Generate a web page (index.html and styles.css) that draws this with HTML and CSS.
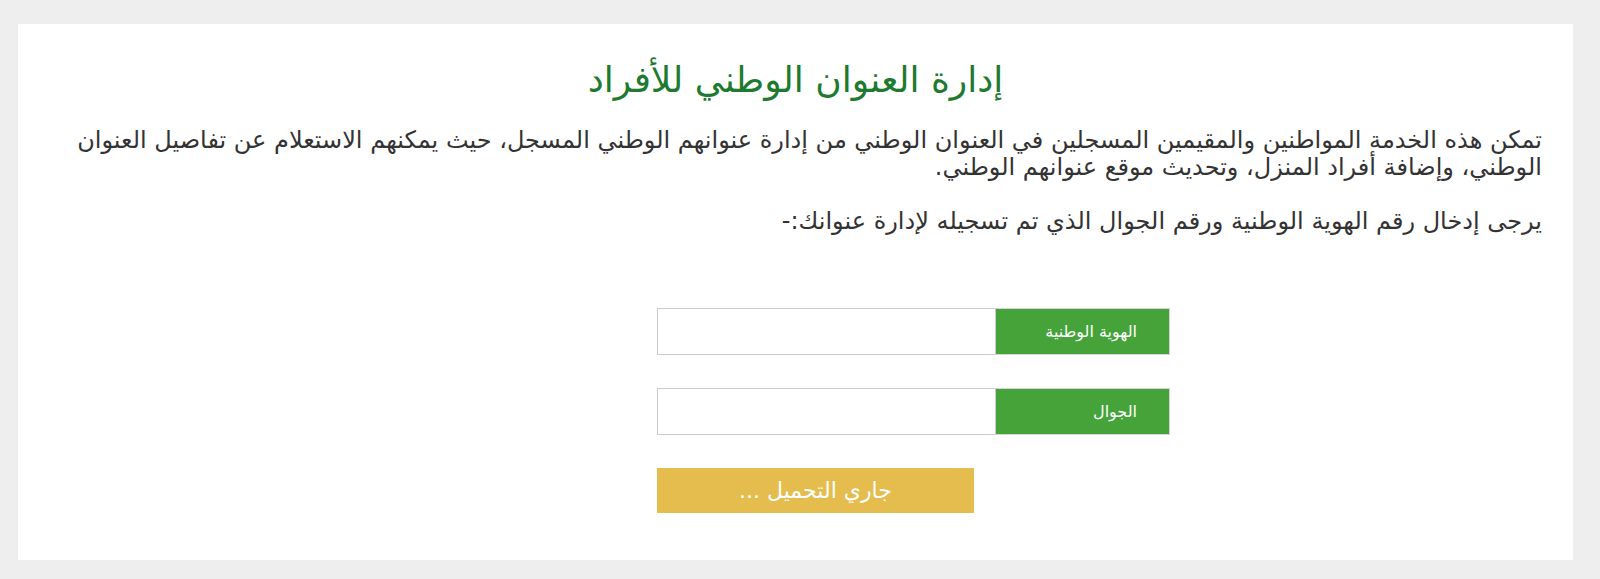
FILE: index.html
```html
<!DOCTYPE html>
<html lang="ar" dir="rtl">
<head>
<meta charset="utf-8">
<title>إدارة العنوان الوطني للأفراد</title>
<link rel="stylesheet" href="styles.css">
</head>
<body>
<div class="panel">
  <h1 class="title">إدارة العنوان الوطني للأفراد</h1>
  <p class="lead">تمكن هذه الخدمة المواطنين والمقيمين المسجلين في العنوان الوطني من إدارة عنوانهم الوطني المسجل، حيث يمكنهم الاستعلام عن تفاصيل العنوان الوطني، وإضافة أفراد المنزل، وتحديث موقع عنوانهم الوطني.</p>
  <p class="lead second">يرجى إدخال رقم الهوية الوطنية ورقم الجوال الذي تم تسجيله لإدارة عنوانك:-</p>
  <form class="form">
    <div class="group">
      <label class="label" for="nid">الهوية الوطنية</label>
      <input class="input" id="nid" type="text">
    </div>
    <div class="group">
      <label class="label" for="mob">الجوال</label>
      <input class="input" id="mob" type="text">
    </div>
    <div class="actions">
      <button type="button" class="btn">جاري التحميل ...</button>
    </div>
  </form>
</div>
</body>
</html>
```
FILE: styles.css
```css
html, body {
  margin: 0;
  padding: 0;
}
body {
  background: #eeeeee;
  font-family: "DejaVu Sans", "Noto Sans", sans-serif;
  color: #333333;
  padding: 24px 27px 0 18px;
  height: 579px;
  box-sizing: border-box;
}
.panel {
  background: #ffffff;
  height: 536px;
  box-sizing: border-box;
  padding: 30px 31px 0 31px;
}
.title {
  margin: 0;
  text-align: center;
  color: #1d7a30;
  font-size: 36px;
  font-weight: normal;
  line-height: 52px;
}
.lead {
  margin: 21px 0 0 0;
  font-size: 24px;
  line-height: 27px;
  text-align: right;
}
.lead.second {
  margin-top: 27px;
}
.form {
  width: 513px;
  margin: 73px 372px 0 0;
}
.group {
  display: flex;
  height: 47px;
  margin-bottom: 33px;
}
.label {
  width: 174px;
  flex: none;
  background: #46a33a;
  color: #ffffff;
  box-sizing: border-box;
  border: 1px solid #d5d5d5;
  border-left: none;
  font-size: 16px;
  display: flex;
  align-items: center;
  padding-right: 32px;
}
.input {
  flex: 1;
  margin: 0;
  border: 1px solid #cccccc;
  box-sizing: border-box;
  height: 47px;
  padding: 0 10px;
  font-family: inherit;
  font-size: 15px;
  outline: none;
}
.actions {
  display: flex;
  justify-content: flex-end;
  margin-top: 0;
}
.btn {
  width: 317px;
  height: 45px;
  border: none;
  background: #e5bc4e;
  color: #ffffff;
  font-family: inherit;
  font-size: 22px;
  padding: 0;
}
```
